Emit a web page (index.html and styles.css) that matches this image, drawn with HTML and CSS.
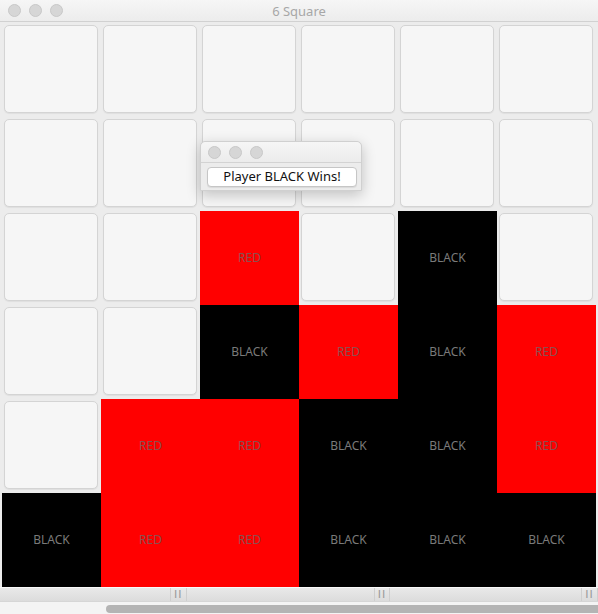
FILE: index.html
```html
<!DOCTYPE html>
<html>
<head>
<meta charset="utf-8">
<link rel="stylesheet" href="styles.css">
</head>
<body>
<div class="window">
  <div class="titlebar">
    <div class="lights"><span></span><span></span><span></span></div>
    <div class="title">6 Square</div>
  </div>
  <div class="grid">
    <div class="cell e"><div class="btn"></div></div>
    <div class="cell e"><div class="btn"></div></div>
    <div class="cell e"><div class="btn"></div></div>
    <div class="cell e"><div class="btn"></div></div>
    <div class="cell e"><div class="btn"></div></div>
    <div class="cell e"><div class="btn"></div></div>

    <div class="cell e"><div class="btn"></div></div>
    <div class="cell e"><div class="btn"></div></div>
    <div class="cell e"><div class="btn"></div></div>
    <div class="cell e"><div class="btn"></div></div>
    <div class="cell e"><div class="btn"></div></div>
    <div class="cell e"><div class="btn"></div></div>

    <div class="cell e"><div class="btn"></div></div>
    <div class="cell e"><div class="btn"></div></div>
    <div class="cell r">RED</div>
    <div class="cell e"><div class="btn"></div></div>
    <div class="cell b">BLACK</div>
    <div class="cell e"><div class="btn"></div></div>

    <div class="cell e"><div class="btn"></div></div>
    <div class="cell e"><div class="btn"></div></div>
    <div class="cell b">BLACK</div>
    <div class="cell r">RED</div>
    <div class="cell b">BLACK</div>
    <div class="cell r">RED</div>

    <div class="cell e"><div class="btn"></div></div>
    <div class="cell r">RED</div>
    <div class="cell r">RED</div>
    <div class="cell b">BLACK</div>
    <div class="cell b">BLACK</div>
    <div class="cell r">RED</div>

    <div class="cell b">BLACK</div>
    <div class="cell r">RED</div>
    <div class="cell r">RED</div>
    <div class="cell b">BLACK</div>
    <div class="cell b">BLACK</div>
    <div class="cell b">BLACK</div>
  </div>
  <div class="strip">
    <div class="seg s1"></div>
    <div class="grip">II</div>
    <div class="seg s2"></div>
    <div class="grip">II</div>
    <div class="seg s3"></div>
    <div class="grip">II</div>
  </div>
  <div class="hscroll">
    <div class="thumb"></div>
  </div>

  <div class="dialog">
    <div class="dtitle">
      <div class="lights"><span></span><span></span><span></span></div>
    </div>
    <div class="dbody">
      <div class="dbtn">Player BLACK Wins!</div>
    </div>
  </div>
</div>
</body>
</html>
```

FILE: styles.css
```css
html, body {
  margin: 0;
  padding: 0;
}
body {
  width: 598px;
  height: 614px;
  overflow: hidden;
  background: #ececec;
  font-family: "Noto Sans", "Liberation Sans", sans-serif;
}
.window {
  position: relative;
  width: 598px;
  height: 614px;
  background: #ececec;
}
.titlebar {
  height: 21px;
  border-bottom: 1px solid #d1d1d1;
  background: linear-gradient(#f6f6f6, #ececec);
  position: relative;
  display: flex;
  align-items: center;
}
.lights {
  display: flex;
  gap: 8px;
  padding-left: 8px;
}
.lights span {
  width: 11px;
  height: 11px;
  border-radius: 50%;
  background: #d6d6d6;
  border: 0.5px solid #c8c8c8;
}
.title {
  position: absolute;
  left: 0;
  right: 0;
  top: 0;
  line-height: 22px;
  text-align: center;
  font-size: 13px;
  color: #a7a7a7;
  font-family: "Noto Sans", "Liberation Sans", sans-serif;
}
.grid {
  display: grid;
  grid-template-columns: repeat(6, 99px);
  grid-template-rows: repeat(6, 94px);
  padding: 1px 0 0 2px;
}
.cell {
  display: flex;
  align-items: center;
  justify-content: center;
  font-size: 12px;
  color: #7b7b7b;
  padding-bottom: 2px;
  box-sizing: border-box;
}
.cell.r { background: #ff0000; color: #8a5050; }
.cell.b { background: #000000; color: #7a7a7a; }
.cell.e {
  align-items: stretch;
  justify-content: stretch;
  padding: 2px 3px 4px 2px;
}
.btn {
  flex: 1;
  background: #f6f6f6;
  border: 1px solid #d4d4d4;
  border-radius: 5px;
  box-shadow: 0 1px 1px rgba(0,0,0,0.06);
}
.strip {
  height: 13px;
  border-top: 1px solid #fafafa;
  border-bottom: 1px solid #d6d6d6;
  background: linear-gradient(#e9e9e9, #dcdcdc);
  display: flex;
}
.seg { height: 100%; }
.s1 { width: 171px; }
.s2 { width: 188px; }
.s3 { width: 192px; }
.grip {
  width: 15px;
  border-left: 1px solid #cfcfcf;
  border-right: 1px solid #cfcfcf;
  color: #9a9a9a;
  font-size: 11px;
  line-height: 13px;
  text-align: center;
  letter-spacing: 1px;
  font-family: "DejaVu Sans", sans-serif;
}
.hscroll {
  height: 13px;
  background: #f4f4f4;
  display: flex;
  align-items: center;
  padding-left: 106px;
}
.thumb {
  flex: 1;
  height: 8px;
  border-radius: 4px 0 0 4px;
  background: #b4b4b4;
}
.dialog {
  position: absolute;
  left: 200px;
  top: 141px;
  width: 162px;
  height: 50px;
  background: #ececec;
  border: 1px solid #d0d0d0;
  border-radius: 5px 5px 0 0;
  box-shadow: 0 4px 14px rgba(0,0,0,0.22);
  box-sizing: border-box;
}
.dtitle {
  height: 20px;
  display: flex;
  align-items: center;
  background: linear-gradient(#f6f6f6, #ececec);
  border-bottom: 1px solid #d3d3d3;
  border-radius: 5px 5px 0 0;
}
.dtitle .lights { padding-left: 7px; }
.dbody {
  padding: 4px 0 0 6px;
}
.dbtn {
  width: 148px;
  height: 18px;
  background: #fff;
  border: 1px solid #c6c6c6;
  border-radius: 4px;
  font-size: 13px;
  line-height: 17px;
  text-align: center;
  color: #111;
  box-shadow: 0 1px 1px rgba(0,0,0,0.08);
}
```
